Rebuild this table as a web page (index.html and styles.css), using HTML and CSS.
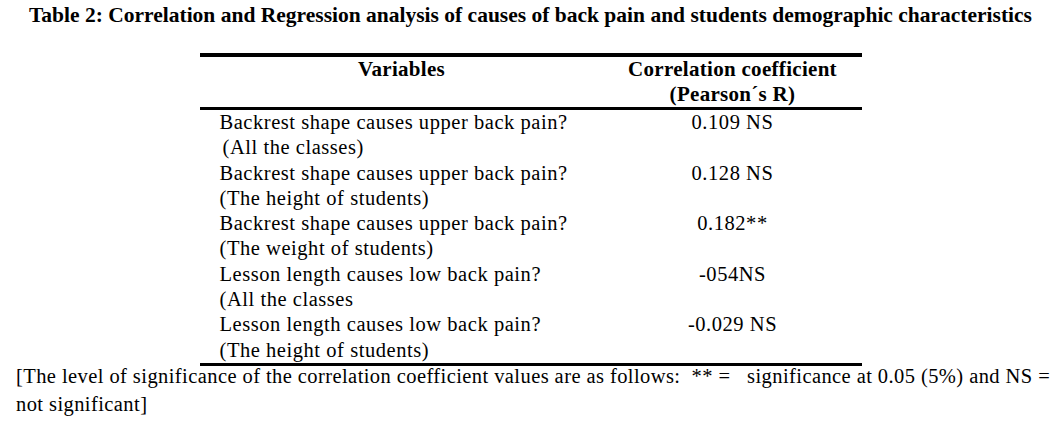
FILE: index.html
```html
<!DOCTYPE html>
<html>
<head>
<meta charset="utf-8">
<link rel="stylesheet" href="styles.css">
</head>
<body>
<h1 class="title">Table 2: Correlation and Regression analysis of causes of back pain and students demographic characteristics</h1>
<table class="data">
  <thead>
    <tr>
      <th class="col-var">Variables</th>
      <th class="col-val">Correlation coefficient<br>(Pearson´s R)</th>
    </tr>
  </thead>
  <tbody>
    <tr>
      <td class="var">Backrest shape causes upper back pain?<br><span class="indent">(All the classes)</span></td>
      <td class="val">0.109 NS</td>
    </tr>
    <tr>
      <td class="var">Backrest shape causes upper back pain?<br>(The height of students)</td>
      <td class="val">0.128 NS</td>
    </tr>
    <tr>
      <td class="var">Backrest shape causes upper back pain?<br>(The weight of students)</td>
      <td class="val">0.182**</td>
    </tr>
    <tr>
      <td class="var">Lesson length causes low back pain?<br>(All the classes</td>
      <td class="val">-054NS</td>
    </tr>
    <tr>
      <td class="var">Lesson length causes low back pain?<br>(The height of students)</td>
      <td class="val">-0.029 NS</td>
    </tr>
  </tbody>
</table>
<p class="note">[The level of significance of the correlation coefficient values are as follows:&nbsp; ** = &nbsp; significance at 0.05 (5%) and NS = not significant]</p>
</body>
</html>
```

FILE: styles.css
```css
html, body {
  margin: 0;
  padding: 0;
  background: #fff;
  color: #000;
  font-family: "Liberation Serif", "Times New Roman", serif;
}

.title {
  margin: 3px 0 0 0;
  font-size: 21.5px;
  line-height: 25px;
  font-weight: bold;
  text-align: center;
}

.data {
  width: 662px;
  margin: 25px auto 0 auto;
  border-collapse: collapse;
  border-top: 4px solid #000;
  border-bottom: 3px solid #000;
}

.data thead tr {
  border-bottom: 3px solid #000;
}

.data th {
  font-size: 21px;
  line-height: 25px;
  letter-spacing: 0.3px;
  font-weight: bold;
  text-align: center;
  vertical-align: top;
  padding: 0;
}

.col-var {
  width: 404px;
}

.col-val {
  width: 258px;
}

.data td {
  font-size: 20.5px;
  letter-spacing: 0.55px;
  line-height: 25.3px;
  vertical-align: top;
  padding: 0;
}

.data td.var {
  padding-left: 20px;
}

.data td.val {
  text-align: center;
}

.indent {
  padding-left: 3px;
}

.note {
  margin: -4px 0 0 0;
  padding: 0 0 0 16px;
  font-size: 20.5px;
  letter-spacing: 0.42px;
  line-height: 28px;
}
```
